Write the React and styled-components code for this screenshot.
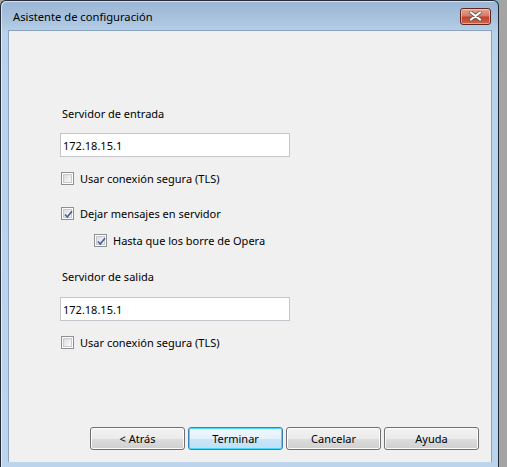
import React from "react";
import styled, { createGlobalStyle } from "styled-components";

const GlobalStyle = createGlobalStyle`
    html, body {
        margin: 0;
        padding: 0;
        background: #a4a4a4;
        overflow: hidden;
    }
    body {
        font-family: "Segoe UI", "Noto Sans", "Open Sans", sans-serif;
        font-size: 11px;
        color: #000;
    }
`;

const Window = styled.div`
    width: 499px;
    height: 468px;
    box-sizing: border-box;
    border: 1px solid #262d36;
    border-right-color: #1f2a33;
    border-radius: 6px 6px 0 0;
    background: linear-gradient(to bottom, #9bb6d6 0px, #aac4e0 20px, #b9d1ea 32px, #bcd4ec 100%);
    box-shadow: 1px 0 0 #49c9e6, inset 1px 1px 0 rgba(255, 255, 255, 0.6);
    display: flex;
    flex-direction: column;
    padding: 0 6px 5px 7px;
`;

const TitleBar = styled.div`
    height: 29px;
    display: flex;
    align-items: center;
    justify-content: space-between;
    padding: 0 1px 0 5px;
`;

const Title = styled.span`
    font-size: 11.2px;
    color: #000;
    margin-top: 1px;
`;

const CloseButton = styled.div`
    width: 29px;
    height: 15px;
    margin-top: 1px;
    border: 1px solid #5d2620;
    border-radius: 3px;
    background: linear-gradient(to bottom, #e8a493 0%, #d27c68 45%, #c2432b 55%, #cf6549 100%);
    box-shadow: inset 0 0 0 1px rgba(255, 220, 210, 0.55);
    display: flex;
    align-items: center;
    justify-content: center;
`;

const Client = styled.div`
    flex: 1;
    background: #f0f0f0;
    border: 1px solid #8aa3bf;
    border-bottom: none;
    display: flex;
    flex-direction: column;
    padding: 75px 12px 12px 51px;
    min-height: 0;
`;

const Label = styled.div`
    line-height: 16px;
    height: 16px;
    margin-top: ${(p) => p.$gap || 0}px;
    padding-left: 2px;
`;

const TextBox = styled.div`
    width: 230px;
    height: 24px;
    box-sizing: border-box;
    margin-top: ${(p) => p.$gap || 0}px;
    border: 1px solid #abadb3;
    border-left-color: #dbdfe6;
    border-right-color: #dbdfe6;
    border-bottom-color: #e3e9ef;
    background: #fff;
    display: flex;
    align-items: center;
    padding-left: 2px;
    outline: 1px solid #c4c6cc;
    outline-offset: -1px;
`;

const Row = styled.div`
    display: flex;
    align-items: center;
    height: 16px;
    margin-top: ${(p) => p.$gap || 0}px;
    margin-left: ${(p) => p.$indent || 0}px;
    gap: 6px;
`;

const Box = styled.div`
    position: relative;
    width: 13px;
    height: 13px;
    box-sizing: border-box;
    border: 1px solid #8e8f8f;
    background: #fff;
    display: flex;
    align-items: center;
    justify-content: center;
    margin-left: 1px;

    &::before {
        content: "";
        width: 9px;
        height: 9px;
        box-sizing: border-box;
        border: 1px solid #c6c9cf;
        background: linear-gradient(135deg, #dcdcdc 0%, #eeeeee 60%, #fafafa 100%);
    }
`;

const Check = styled.svg`
    position: absolute;
    left: 1px;
    top: 1px;
`;

const Footer = styled.div`
    margin-top: auto;
    display: flex;
    justify-content: flex-end;
    gap: 3px;
`;

const Button = styled.div`
    width: 95px;
    height: 23px;
    box-sizing: border-box;
    border: 1px solid ${(p) => (p.$focused ? "#3c7fb1" : "#707070")};
    border-radius: 3px;
    background: ${(p) =>
        p.$focused
            ? "linear-gradient(to bottom, #f0f8fd 0%, #e3f1fb 50%, #c9e6f8 51%, #bfe0f6 100%)"
            : "linear-gradient(to bottom, #f2f2f2 0%, #ebebeb 50%, #dddddd 51%, #cfcfcf 100%)"};
    box-shadow: inset 0 0 0 1px ${(p) => (p.$focused ? "#48d8fb" : "#fcfcfc")};
    display: flex;
    align-items: center;
    justify-content: center;
    padding-bottom: 1px;
`;

const CheckBox = ({ checked }) => (
    <Box>
        {checked && (
            <Check width="11" height="11" viewBox="0 0 11 11">
                <path d="M2 5.5 L4.3 8 L9 2.2" fill="none" stroke="#4a5f97" strokeWidth="1.7" />
            </Check>
        )}
    </Box>
);

const App = () => {
    return (
        <>
            <GlobalStyle />
            <Window>
                <TitleBar>
                    <Title>Asistente de configuración</Title>
                    <CloseButton>
                        <svg width="13" height="10" viewBox="0 0 13 10">
                            <path
                                d="M2 1.5 L11 8.5 M11 1.5 L2 8.5"
                                stroke="#5b5b5b"
                                strokeWidth="3.6"
                                strokeLinecap="round"
                            />
                            <path
                                d="M2 1.5 L11 8.5 M11 1.5 L2 8.5"
                                stroke="#ffffff"
                                strokeWidth="2.2"
                                strokeLinecap="round"
                            />
                        </svg>
                    </CloseButton>
                </TitleBar>
                <Client>
                    <Label>Servidor de entrada</Label>
                    <TextBox $gap={11}>172.18.15.1</TextBox>
                    <Row $gap={13}>
                        <CheckBox />
                        <span>Usar conexión segura (TLS)</span>
                    </Row>
                    <Row $gap={19}>
                        <CheckBox checked />
                        <span>Dejar mensajes en servidor</span>
                    </Row>
                    <Row $gap={11} $indent={33}>
                        <CheckBox checked />
                        <span>Hasta que los borre de Opera</span>
                    </Row>
                    <Label $gap={21}>Servidor de salida</Label>
                    <TextBox $gap={12}>172.18.15.1</TextBox>
                    <Row $gap={13}>
                        <CheckBox />
                        <span>Usar conexión segura (TLS)</span>
                    </Row>
                    <Footer>
                        <Button>&lt; Atrás</Button>
                        <Button $focused>Terminar</Button>
                        <Button>Cancelar</Button>
                        <Button>Ayuda</Button>
                    </Footer>
                </Client>
            </Window>
        </>
    );
};

export default App;
